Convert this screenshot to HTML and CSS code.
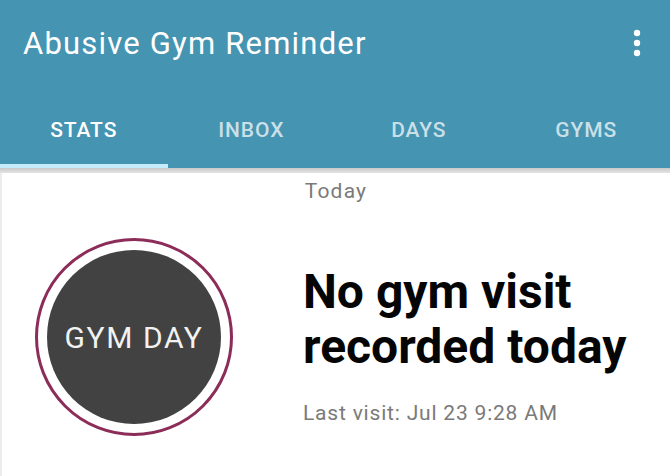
FILE: index.html
```html
<!DOCTYPE html>
<html>
<head>
<meta charset="utf-8">
<link rel="stylesheet" href="styles.css">
</head>
<body>
<div class="appbar">
  <div class="toolbar">
    <div class="title">Abusive Gym Reminder</div>
    <svg class="menu" width="10" height="30" viewBox="0 0 10 30">
      <circle cx="5" cy="5" r="3.2" fill="#fff"/>
      <circle cx="5" cy="15" r="3.2" fill="#fff"/>
      <circle cx="5" cy="25" r="3.2" fill="#fff"/>
    </svg>
  </div>
  <div class="tabs">
    <div class="tab active">STATS</div>
    <div class="tab">INBOX</div>
    <div class="tab">DAYS</div>
    <div class="tab">GYMS</div>
  </div>
</div>
<div class="shadow"></div>
<div class="content">
  <div class="today">Today</div>
  <div class="row">
    <div class="ring">
      <div class="disc">GYM DAY</div>
    </div>
    <div class="info">
      <div class="headline">No gym visit<br>recorded today</div>
      <div class="last">Last visit: Jul 23 9:28 AM</div>
    </div>
  </div>
</div>
</body>
</html>
```

FILE: styles.css
```css
html, body {
  margin: 0;
  padding: 0;
  width: 670px;
  height: 476px;
  overflow: hidden;
  background: #ffffff;
  font-family: Roboto, "Liberation Sans", sans-serif;
}
.appbar {
  background: #4594b1;
  height: 168px;
  display: flex;
  flex-direction: column;
}
.toolbar {
  height: 118px;
  display: flex;
  align-items: flex-start;
  justify-content: space-between;
  box-sizing: border-box;
  padding: 26px 0 0 23px;
}
.title {
  color: #ffffff;
  font-size: 31px;
  line-height: 36px;
  letter-spacing: 1.2px;
}
.menu {
  margin: 2px 28px 0 0;
}
.tabs {
  display: flex;
  height: 50px;
}
.tab {
  flex: 1;
  text-align: center;
  font-size: 21px;
  line-height: 24px;
  font-weight: 500;
  letter-spacing: 0.9px;
  color: rgba(255, 255, 255, 0.72);
  box-sizing: border-box;
}
.tab.active {
  color: #ffffff;
  border-bottom: 4px solid #c4ecfa;
  height: 50px;
}
.shadow {
  height: 5px;
  background: linear-gradient(#c9c9c9, #e4e4e4);
}
.content {
  border-left: 2px solid #ececec;
  height: 303px;
  box-sizing: border-box;
  padding-top: 6px;
}
.today {
  text-align: center;
  color: #7a7a7a;
  font-size: 21px;
  line-height: 24px;
  letter-spacing: 1.2px;
}
.row {
  display: flex;
  margin-top: 35px;
}
.ring {
  margin-left: 33px;
  width: 198px;
  height: 198px;
  box-sizing: border-box;
  border: 3px solid #8c2d59;
  border-radius: 50%;
  display: flex;
  align-items: center;
  justify-content: center;
}
.disc {
  width: 174px;
  height: 174px;
  border-radius: 50%;
  background: #424242;
  color: #f2f2f2;
  font-size: 30px;
  letter-spacing: 1.6px;
  display: flex;
  align-items: center;
  justify-content: center;
}
.info {
  margin-left: 70px;
  padding-top: 26px;
}
.headline {
  font-size: 48px;
  line-height: 55px;
  font-weight: 700;
  color: #050505;
}
.last {
  margin-top: 27px;
  color: #7a7a7a;
  font-size: 21px;
  line-height: 24px;
  letter-spacing: 0.8px;
}
```
